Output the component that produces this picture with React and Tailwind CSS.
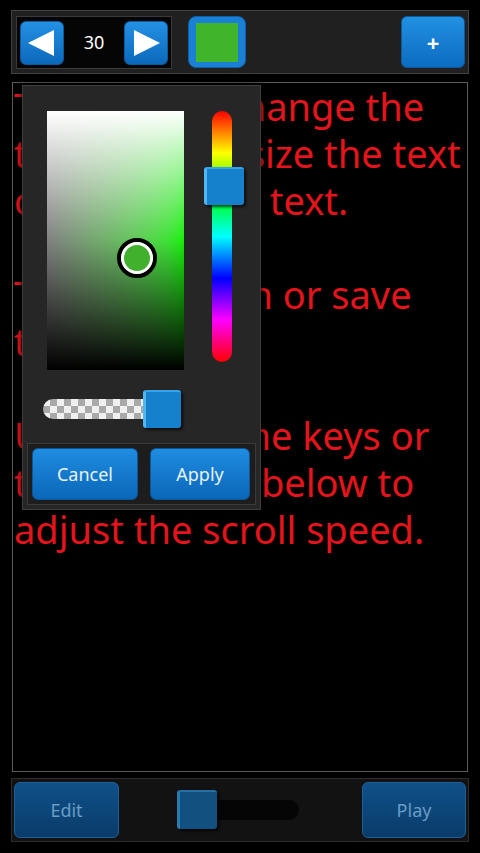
import React from "react";

const font = { fontFamily: '"Noto Sans", "Open Sans", sans-serif' };

const lines = [
  "Tap here to change the",
  "text, pinch resize the text",
  "colours of the text.",
  "",
  "Tap the screen or save",
  "the text.",
  "",
  "Use the volume keys or",
  "the slider bar below to",
  "adjust the scroll speed.",
];

/* ================= SMALL PARTS ================= */
const Arrow = ({ dir }) => (
  <button className="w-[44px] h-[44px] rounded-[6px] bg-linear-to-b from-[#2491e4] to-[#0b68bb] border border-[#0a5aa0] flex items-center justify-center">
    <svg width="32" height="30" viewBox="0 0 32 30">
      {dir === "left" ? (
        <polygon points="2,15 28,2 28,28" fill="#fff" />
      ) : (
        <polygon points="30,15 4,2 4,28" fill="#fff" />
      )}
    </svg>
  </button>
);

const Thumb = ({ className = "" }) => (
  <div
    className={`rounded-[3px] bg-[#1580cc] border-l-[3px] border-t-[2px] border-l-[#52b6f2] border-t-[#3aa3e6] shadow-[2px_2px_3px_rgba(0,0,0,0.7)] ${className}`}
  />
);

export default function App() {
  return (
    <div className="relative w-[480px] h-[853px] bg-black flex flex-col overflow-hidden" style={font}>
      {/* Top bar */}
      <div className="mt-[10px] mx-[11px] h-[64px] bg-[#202020] border border-[#414141] flex items-start pl-[4px] pr-[3px] pt-[5px]">
        <div className="w-[156px] h-[53px] bg-[#050505] border border-[#3a3a3a] flex items-center justify-between px-[3px]">
          <Arrow dir="left" />
          <span className="text-white text-[18px]">30</span>
          <Arrow dir="right" />
        </div>
        <button className="ml-[16px] w-[58px] h-[52px] rounded-[8px] bg-[#1a80d6] border border-[#0f5fa5] flex items-center justify-center">
          <div className="w-[42px] h-[39px] bg-[#40b52b]" />
        </button>
        <div className="flex-1" />
        <button className="w-[64px] h-[52px] rounded-[6px] bg-linear-to-b from-[#2290e2] to-[#0b6cbf] border border-[#0a5aa0] text-white text-[22px] font-bold leading-none">
          +
        </button>
      </div>

      {/* Text area */}
      <div className="mt-[8px] mx-[12px] h-[690px] border border-[#5a5a5a] text-[#e5141c] text-[38px] leading-[47px] pl-[1px] whitespace-nowrap overflow-hidden">
        {lines.map((l, i) => (
          <div key={i} className="h-[47px]">
            {l}
          </div>
        ))}
      </div>

      {/* Bottom bar */}
      <div className="mt-[6px] mx-[11px] h-[64px] bg-[#121212] border border-[#2c2c2c] flex items-center px-[2px]">
        <button className="w-[105px] h-[56px] rounded-[6px] bg-linear-to-b from-[#0f5089] to-[#0a3c69] border border-[#1d5f98] text-[#6a9cc6] text-[18px]">
          Edit
        </button>
        <div className="relative ml-[60px] w-[122px] h-[40px] flex items-center">
          <div className="w-[120px] h-[20px] rounded-full bg-[#050505]" />
          <div className="absolute left-[-2px] top-0 w-[40px] h-[39px] rounded-[3px] bg-[#12507f] border-l-[3px] border-t-[2px] border-l-[#2b7cb2] border-t-[#2570a4] shadow-[2px_2px_3px_rgba(0,0,0,0.7)]" />
        </div>
        <div className="flex-1" />
        <button className="w-[104px] h-[56px] rounded-[6px] bg-linear-to-b from-[#0f5089] to-[#0a3c69] border border-[#1d5f98] text-[#6a9cc6] text-[18px]">
          Play
        </button>
      </div>

      {/* Colour picker dialog */}
      <div className="absolute left-[22px] top-[85px] w-[239px] h-[425px] bg-[#262626] border border-[#3e3e3e] shadow-[0_0_6px_rgba(0,0,0,0.8)] pt-[25px]">
        <div className="flex items-start pl-[24px]">
          <div className="relative w-[137px] h-[259px] bg-linear-to-r from-[#808080] to-[#11ee00]">
            <div className="absolute inset-0 bg-linear-to-b from-white via-transparent to-black" />
            <div className="absolute left-[70px] top-[127px] w-[40px] h-[40px] rounded-full border-[4px] border-black flex items-center justify-center">
              <div className="w-[32px] h-[32px] rounded-full border-[3px] border-white bg-[#41b02c]" />
            </div>
          </div>
          <div className="relative ml-[28px] w-[20px] h-[251px] rounded-full bg-[linear-gradient(to_bottom,#f00,#ff0,#0f0,#0ff,#00f,#f0f,#f00)]">
            <Thumb className="absolute left-[-8px] top-[56px] w-[40px] h-[38px]" />
          </div>
        </div>

        <div className="relative mt-[20px] ml-[20px] w-[139px] h-[38px] flex items-center">
          <div className="w-[117px] h-[20px] rounded-l-full bg-[repeating-conic-gradient(#a9a9a9_0%_25%,#f0f0f0_0%_50%)] bg-[length:14px_14px]" />
          <Thumb className="absolute left-[100px] top-0 w-[38px] h-[38px]" />
        </div>

        <div className="mt-[15px] ml-[4px] w-[229px] h-[62px] bg-[#1d1d1d] border border-[#3a3a3a] flex items-center pl-[4px] gap-[12px]">
          <button className="w-[106px] h-[52px] rounded-[6px] bg-linear-to-b from-[#1f8de0] to-[#0a66b8] border border-[#0a569a] text-[#e8f2fb] text-[18px]">
            Cancel
          </button>
          <button className="w-[100px] h-[52px] rounded-[6px] bg-linear-to-b from-[#1f8de0] to-[#0a66b8] border border-[#0a569a] text-[#e8f2fb] text-[18px]">
            Apply
          </button>
        </div>
      </div>
    </div>
  );
}
